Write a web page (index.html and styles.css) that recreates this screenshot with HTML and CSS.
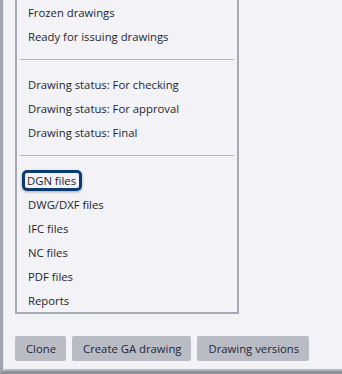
FILE: index.html
```html
<!DOCTYPE html>
<html>
<head>
<meta charset="utf-8">
<link rel="stylesheet" href="styles.css">
</head>
<body>
<div class="frame">
  <div class="inner">
    <div class="panel">
      <div class="row">Frozen drawings</div>
      <div class="row">Ready for issuing drawings</div>
      <div class="sep"></div>
      <div class="row">Drawing status: For checking</div>
      <div class="row">Drawing status: For approval</div>
      <div class="row">Drawing status: Final</div>
      <div class="sep"></div>
      <div class="row"><span class="focus">DGN files</span></div>
      <div class="row">DWG/DXF files</div>
      <div class="row">IFC files</div>
      <div class="row">NC files</div>
      <div class="row">PDF files</div>
      <div class="row">Reports</div>
    </div>
    <div class="buttons">
      <button class="btn">Clone</button>
      <button class="btn">Create GA drawing</button>
      <button class="btn">Drawing versions</button>
    </div>
  </div>
</div>
</body>
</html>
```

FILE: styles.css
```css
html, body {
  margin: 0;
  padding: 0;
}
body {
  width: 342px;
  height: 374px;
  overflow: hidden;
  background: #f2f2f7;
  font-family: "Open Sans", "Noto Sans", sans-serif;
  font-size: 11.3px;
  color: #1f1f2b;
}
.frame {
  box-sizing: border-box;
  width: 342px;
  height: 374px;
  border-left: 3px solid #a3a5ae;
  border-bottom: 3px solid #8e9099;
}
.inner {
  box-sizing: border-box;
  height: 100%;
  border-left: 1px solid #e4e4ea;
  border-bottom: 2px solid #b6b8c1;
  padding-left: 11px;
}
.panel {
  box-sizing: border-box;
  width: 224px;
  border: 2px solid #a7a9b3;
  border-top: none;
  display: flex;
  flex-direction: column;
}
.row {
  height: 24px;
  display: flex;
  align-items: center;
  padding-left: 11px;
  white-space: nowrap;
}
.sep {
  height: 24px;
  margin: 0 3px;
}
.sep::after {
  content: "";
  display: block;
  margin-top: 11px;
  height: 1px;
  background: #b7b8c0;
}
.focus {
  display: inline-block;
  margin-left: -6px;
  padding: 0 3px 0 2px;
  line-height: 15px;
  border: 3px solid #0d3a70;
  border-radius: 5px;
  box-shadow: 0 1px 3px rgba(0, 0, 0, 0.3);
}
.buttons {
  display: flex;
  gap: 6px;
  margin-top: 22px;
}
.btn {
  height: 25px;
  padding: 0 10px 0 11px;
  border: none;
  border-radius: 2px;
  background: #b9bcc5;
  color: #262634;
  font-family: inherit;
  font-size: 11.3px;
}
```
